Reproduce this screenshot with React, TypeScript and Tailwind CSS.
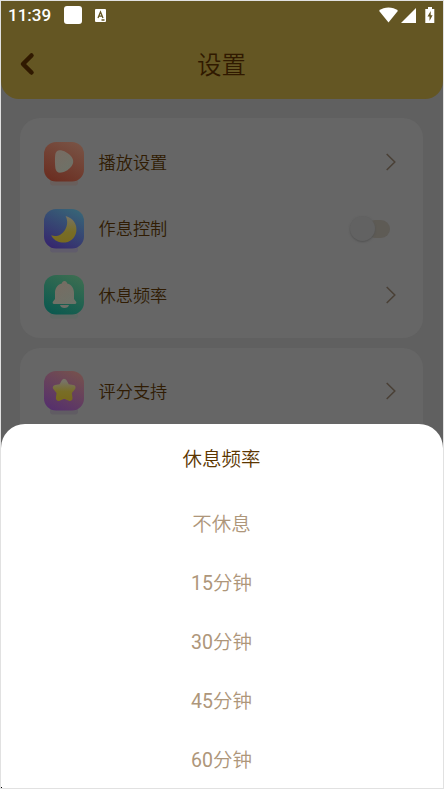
import type { ReactNode } from "react";

function Tile({ id, from, to, shadow, children }: { id: string; from: string; to: string; shadow: string; children: ReactNode }) {
  return (
    <svg className="h-[46px] w-10 shrink-0" viewBox="0 0 40 46">
      <defs>
        <linearGradient id={id} x1="0.75" y1="0" x2="0.25" y2="1">
          <stop offset="0" stopColor={from} />
          <stop offset="1" stopColor={to} />
        </linearGradient>
        <linearGradient id={id + "-gold"} x1="0.5" y1="0" x2="0.5" y2="1">
          <stop offset="0" stopColor="#777365" />
          <stop offset="0.6" stopColor="#786d26" />
          <stop offset="1" stopColor="#78691f" />
        </linearGradient>
        <linearGradient id={id + "-pale"} x1="0.2" y1="0" x2="0.8" y2="1">
          <stop offset="0" stopColor="#776c62" />
          <stop offset="1" stopColor="#6d7268" />
        </linearGradient>
      </defs>
      <rect x="6" y="34" width="28" height="9.5" rx="3" fill={shadow} fillOpacity="0.7" />
      <rect width="40" height="39.5" rx="12" fill={`url(#${id})`} />
      {children}
    </svg>
  );
}

const PlayIcon = () => (
  <Tile id="play" from="#785244" to="#6b2e21" shadow="#6b5d59">
    <path d="M11.2 13C11.5 9.5 13.8 7.7 17 8.3C21.5 9.2 26.5 12.7 28.4 16.2C29.6 18.6 29.5 21.2 28 23.4C25.8 26.8 21.5 30 17.2 30.6C13.8 31 11.8 29.2 11.4 26.2C10.9 22 10.8 17 11.2 13Z" fill="url(#play-pale)" />
  </Tile>
);

const MoonIcon = () => (
  <Tile id="moon" from="#376477" to="#36276e" shadow="#5e596d">
    <path d="M21.6 7C29 9 33.4 15.2 32.3 22.4C31 29.9 25 34 18 33.5C12.8 33 9 30.2 7.2 26.3C12.6 28.2 18 25.9 21 20.9C23.6 16.5 24 11.5 21.6 7Z" fill="url(#moon-gold)" />
  </Tile>
);

const BellIcon = () => (
  <Tile id="bell" from="#3b6d51" to="#0b594f" shadow="#5c6862">
    <path d="M16 30H25C24.5 32 23 33 20.5 33C18 33 16.5 32 16 30Z" fill="#6d7068" />
    <path d="M20.5 6C22.1 6 22.8 7.1 23.2 8.5C27.7 9.8 30 13.2 30 18V24L32.1 26.8C32.8 28 32.2 29 31 29H10C8.8 29 8.2 28 8.9 26.8L11 24V18C11 13.2 13.3 9.8 17.8 8.5C18.2 7.1 18.9 6 20.5 6Z" fill="url(#bell-pale)" />
  </Tile>
);

const StarIcon = () => (
  <Tile id="star" from="#75504e" to="#56306c" shadow="#5e5963">
    <path d="M20.2 10.6L23 15.6L28.8 16.6L25 21.2L25.8 27.2L20.2 24.8L14.6 27.2L15.4 21.2L11.6 16.6L17.4 15.6Z" fill="url(#star-gold)" stroke="url(#star-gold)" strokeWidth="5.4" strokeLinejoin="round" />
  </Tile>
);

const Chevron = () => (
  <svg className="h-[18px] w-[10px]" viewBox="0 0 10 18" fill="none">
    <path d="M0.7 1L8.8 9L0.7 17" stroke="#4a4036" strokeWidth="1.5" />
  </svg>
);

const Toggle = () => (
  <div className="relative mr-px h-[26px] w-10">
    <div className="absolute top-1 right-0 h-[18px] w-6 rounded-full bg-[#5e5b55]" />
    <div className="absolute top-0 left-0 size-[25px] rounded-full bg-[#626262] shadow-[0_1px_2px_#525252]" />
  </div>
);

function Row({ icon, label, children }: { icon: ReactNode; label: string; children: ReactNode }) {
  return (
    <div className="flex h-[66.6px] items-center pr-[27px] pl-6">
      <div className="mt-[6px] flex">{icon}</div>
      <span className="ml-[14.5px] flex-1 pt-px text-[17.2px] leading-6 font-[350] text-[#301c03]">{label}</span>
      {children}
    </div>
  );
}

const StatusBar = () => (
  <div className="flex h-7 items-center pr-2 pl-[7px] text-white">
    <span className="w-[45px] pt-px text-[17px] leading-none font-medium">11:39</span>
    <span className="ml-[11px] size-[18px] rounded-[3px] bg-white" />
    <svg className="ml-[13px] h-[13px] w-[11px]" viewBox="0 0 11 13">
      <rect width="11" height="13" rx="1" fill="#fff" />
      <path d="M3 9L5.5 3L8 9M3.8 7.2H7.2M6.5 11H9.5" fill="none" stroke="#645623" strokeWidth="1.3" />
    </svg>
    <svg className="ml-auto h-4 w-[19px]" viewBox="0 0 19 16">
      <path d="M0 3.7C5.5-.7 13.5-.7 19 3.7L9.5 15.5Z" fill="#fff" />
    </svg>
    <svg className="ml-[3px] size-[15px]" viewBox="0 0 15 15">
      <path d="M15 0V15H0Z" fill="#fff" />
    </svg>
    <svg className="ml-[9px] h-4 w-[10px]" viewBox="0 0 10 16">
      <path d="M3 0H7V2H9.3V16H.3V2H3Z" fill="#fff" />
      <path d="M5.7 4L2.5 9.4H4.5V14L7.6 8.2H5.7Z" fill="#645623" />
    </svg>
  </div>
);

const options = [
  { minutes: "", label: "不休息" },
  { minutes: "15", label: "分钟" },
  { minutes: "30", label: "分钟" },
  { minutes: "45", label: "分钟" },
  { minutes: "60", label: "分钟" },
];

export default function App() {
  return (
    <div className="relative h-[789px] w-[444px] overflow-hidden border border-[#e1e1e1] bg-[#606060] font-[Roboto,'Noto_Sans_CJK_SC',sans-serif]">
      <header className="h-[98px] rounded-b-[18px] bg-[#645623]">
        <StatusBar />
        <div className="grid h-[70px] grid-cols-[60px_1fr_60px] items-center">
          <svg className="ml-[18px] h-6 w-4" viewBox="0 0 16 24" fill="none">
            <path d="M12.5 3.5L4 12L12.5 20.5" stroke="#301900" strokeWidth="4.5" strokeLinecap="round" strokeLinejoin="round" />
          </svg>
          <h1 className="pt-[3px] pr-px text-center text-[24.5px] leading-8 font-[350] text-[#301900]">设置</h1>
        </div>
      </header>

      <main className="mr-[20px] ml-[19px] flex flex-col gap-[10px] pt-[19px]">
        <section className="h-[220px] rounded-[20px] bg-[#666] pt-[11px]">
          <Row icon={<PlayIcon />} label="播放设置"><Chevron /></Row>
          <Row icon={<MoonIcon />} label="作息控制"><span className="mr-[5px]"><Toggle /></span></Row>
          <Row icon={<BellIcon />} label="休息频率"><Chevron /></Row>
        </section>
        <section className="h-[220px] rounded-[20px] bg-[#666] pt-[10px]">
          <Row icon={<StarIcon />} label="评分支持"><Chevron /></Row>
        </section>
      </main>

      <div className="absolute inset-x-0 bottom-0 h-[364px] rounded-t-[24px] bg-white pt-[21px] pr-px text-center">
        <h2 className="text-[19.5px] leading-[30px] font-[350] text-[#5c3600]">休息频率</h2>
        <ul className="mt-[19.5px]">
          {options.map(({ minutes, label }) => (
            <li key={minutes + label} className="h-[59.2px] text-[19.5px] leading-[59.2px] font-[350] text-[#ae967a]">
              <span className="font-normal">{minutes}</span>{label}
            </li>
          ))}
        </ul>
      </div>
      <div className="absolute bottom-0 left-0 size-px bg-black" />
    </div>
  );
}
